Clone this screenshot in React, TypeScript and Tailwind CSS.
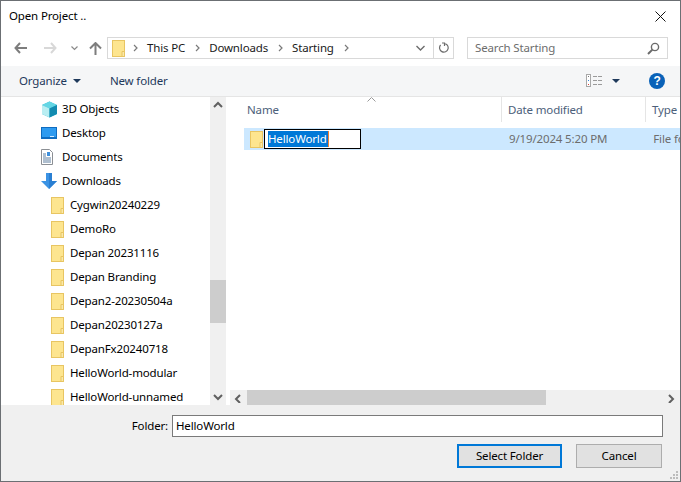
const font = "font-['Noto_Sans','Open_Sans',sans-serif]";

const folders = [
  "Cygwin20240229",
  "DemoRo",
  "Depan 20231116",
  "Depan Branding",
  "Depan2-20230504a",
  "Depan20230127a",
  "DepanFx20240718",
  "HelloWorld-modular",
  "HelloWorld-unnamed",
];

function FolderIcon() {
  return (
    <svg width="13" height="17" viewBox="0 0 13 17" className="shrink-0">
      <rect x="0.5" y="0.5" width="12" height="16" fill="#fde58f" stroke="#e8c562" />
      <path d="M10 16.5V11.5H12.5V16.5Z" fill="#fbe9a8" stroke="#e8c562" />
    </svg>
  );
}

function CubeIcon() {
  return (
    <svg width="17" height="17" viewBox="0 0 17 17" className="shrink-0">
      <path d="M8.5 0.5L16 4V13L8.5 16.5L1 13V4Z" fill="#2fb8d2" />
      <path d="M8.5 0.5L16 4L8.5 7.5L1 4Z" fill="#63d6e4" />
      <path d="M1 4L8.5 7.5V16.5L1 13Z" fill="#b9eef2" />
      <path d="M8.5 7.5L16 4V13L8.5 16.5Z" fill="#128bb0" />
    </svg>
  );
}

function DesktopIcon() {
  return (
    <svg width="16" height="12" viewBox="0 0 16 12" className="shrink-0">
      <rect x="0" y="0" width="16" height="12" fill="#0f6cc0" />
      <rect x="1" y="1" width="14" height="9" fill="#2e9bf0" />
      <rect x="9" y="9" width="4" height="1" fill="#d5ecff" />
    </svg>
  );
}

function DocumentsIcon() {
  return (
    <svg width="12" height="16" viewBox="0 0 12 16" className="shrink-0">
      <path d="M0.5 0.5H8.5L11.5 3.5V15.5H0.5Z" fill="#fff" stroke="#8b8f94" />
      <path d="M2 5H5M2 7H5M2 9H10M2 11H10M2 13H10" stroke="#5f7f9f" />
      <path d="M6 3H9V7H6Z" fill="#3d8fdc" />
    </svg>
  );
}

function DownloadsIcon() {
  return (
    <svg width="16" height="16" viewBox="0 0 16 16" className="shrink-0">
      <path d="M5 0H11V8H16L8 16L0 8H5Z" fill="#3b93e4" />
      <path d="M8 0H11V8H16L8 16Z" fill="#2a7fd2" />
    </svg>
  );
}

function NavArrow({ color, rotate }: { color: string; rotate: string }) {
  return (
    <svg width="13" height="12" viewBox="0 0 13 12" className={rotate}>
      <path d="M6 1L1.5 6L6 11M2 6H13" fill="none" stroke={color} strokeWidth="2" />
    </svg>
  );
}

function Chevron({ dir }: { dir: "up" | "down" | "left" | "right" }) {
  const d = {
    up: "M1 6L5 2L9 6",
    down: "M1 2L5 6L9 2",
    left: "M6 1L2 5L6 9",
    right: "M2 1L6 5L2 9",
  }[dir];
  return (
    <svg width="10" height="10" viewBox="0 0 10 8" className="shrink-0">
      <path d={d} fill="none" stroke="#606060" strokeWidth="2" />
    </svg>
  );
}

function Crumb() {
  return (
    <svg width="5" height="8" viewBox="0 0 5 8" className="shrink-0">
      <path d="M1 1L4 4L1 7" fill="none" stroke="#7a7a7a" strokeWidth="1.2" />
    </svg>
  );
}

function SideRow({ icon, label, child }: { icon: React.ReactNode; label: string; child?: boolean }) {
  return (
    <div className={`flex h-6 shrink-0 items-center ${child ? "pl-[50px]" : "pl-[40px]"}`}>
      <div className={`flex items-center justify-start ${child ? "w-[19px]" : "w-[21px]"}`}>{icon}</div>
      <span className="text-[11.5px] text-[#000] whitespace-nowrap">{label}</span>
    </div>
  );
}

export default function App() {
  return (
    <div className={`${font} flex h-[482px] w-[681px] flex-col overflow-hidden border border-[#6b6f73] bg-white tracking-[-0.15px]`}>
      {/* title bar */}
      <div className="flex h-[29px] shrink-0 items-center justify-between pl-[8px] pr-[14px] pt-[1px]">
        <span className="text-[11.5px] text-black">Open Project ..</span>
        <svg width="11" height="11" viewBox="0 0 11 11">
          <path d="M0.5 0.5L10.5 10.5M10.5 0.5L0.5 10.5" stroke="#111" strokeWidth="1" />
        </svg>
      </div>

      {/* nav row */}
      <div className="flex h-[36px] shrink-0 items-start pt-[7px]">
        <div className="flex h-[22px] w-[106px] shrink-0 items-center pl-[13px]">
          <NavArrow color="#7d7d7d" rotate="" />
          <div className="w-[17px]" />
          <NavArrow color="#d8d8d8" rotate="rotate-180" />
          <svg width="7" height="5" viewBox="0 0 7 5" className="ml-[14px]">
            <path d="M0.5 0.5L3.5 3.5L6.5 0.5" fill="none" stroke="#8a8a8a" strokeWidth="1.2" />
          </svg>
          <svg width="13" height="13" viewBox="0 0 13 13" className="ml-[11px]">
            <path d="M1 6.5L6.5 1L12 6.5M6.5 1.5V13" fill="none" stroke="#7d7d7d" strokeWidth="2" />
          </svg>
        </div>
        <div className="flex h-[22px] w-[347px] shrink-0 items-center border border-[#d9d9d9] pl-[4px]">
          <FolderIcon />
          <div className="ml-[8px]"><Crumb /></div>
          <span className="ml-[9px] text-[11.5px] text-[#1a1a1a]">This PC</span>
          <div className="ml-[10px]"><Crumb /></div>
          <span className="ml-[9px] text-[11.5px] text-[#1a1a1a]">Downloads</span>
          <div className="ml-[10px]"><Crumb /></div>
          <span className="ml-[9px] text-[11.5px] text-[#1a1a1a]">Starting</span>
          <div className="ml-[10px]"><Crumb /></div>
          <div className="flex-1" />
          <svg width="9" height="6" viewBox="0 0 9 6" className="mr-[8px]">
            <path d="M0.5 1L4.5 5L8.5 1" fill="none" stroke="#6d6d6d" strokeWidth="1.4" />
          </svg>
          <div className="flex h-full w-[20px] items-center justify-center border-l border-[#d9d9d9]">
            <svg width="11" height="12" viewBox="0 0 11 12">
              <path d="M4 1H6.5V4M6 1.5A4.3 4.3 0 1 1 2.6 3" fill="none" stroke="#6d6d6d" strokeWidth="1.2" />
            </svg>
          </div>
        </div>
        <div className="ml-[13px] flex h-[22px] w-[201px] shrink-0 items-center justify-between border border-[#d9d9d9] pl-[7px] pr-[7px]">
          <span className="text-[11.5px] text-[#6d6d6d]">Search Starting</span>
          <svg width="13" height="13" viewBox="0 0 13 13">
            <circle cx="8" cy="5" r="3.6" fill="none" stroke="#6b6b6b" strokeWidth="1.4" />
            <path d="M5.4 7.6L1 12" stroke="#6b6b6b" strokeWidth="2" />
          </svg>
        </div>
      </div>

      {/* toolbar */}
      <div className="flex h-[31px] shrink-0 items-center border-b border-[#e5e5e5] bg-[#f5f6f7] pb-[1px] pl-[18px] pr-[15px]">
        <span className="text-[11.5px] text-[#1e395b]">Organize</span>
        <svg width="8" height="4" viewBox="0 0 8 4" className="ml-[6px]">
          <path d="M0 0H8L4 4Z" fill="#1e395b" />
        </svg>
        <span className="ml-[29px] text-[11.5px] text-[#1e395b]">New folder</span>
        <div className="flex-1" />
        <svg width="16" height="13" viewBox="0 0 16 13">
          <rect x="0.5" y="0.5" width="4" height="12" fill="#fff" stroke="#a8a8a8" />
          <rect x="2" y="2" width="1" height="1" fill="#777" />
          <rect x="2" y="6" width="1" height="1" fill="#3a86d8" />
          <rect x="2" y="10" width="1" height="1" fill="#d8443c" />
          <path d="M7 2.5H11M12 2.5H16M7 6.5H11M12 6.5H16M7 10.5H11M12 10.5H16" stroke="#9a9a9a" />
        </svg>
        <svg width="8" height="4" viewBox="0 0 8 4" className="ml-[10px] mr-[29px]">
          <path d="M0 0H8L4 4Z" fill="#1e395b" />
        </svg>
        <div className="flex h-[16px] w-[16px] items-center justify-center rounded-full bg-[#0a62b8]">
          <span className="font-['Liberation_Sans',sans-serif] text-[12px] font-bold leading-none text-white">?</span>
        </div>
      </div>

      {/* main */}
      <div className="flex h-[308px] shrink-0">
        <div className="flex w-[209px] shrink-0 flex-col overflow-hidden">
          <SideRow icon={<CubeIcon />} label="3D Objects" />
          <SideRow icon={<DesktopIcon />} label="Desktop" />
          <SideRow icon={<DocumentsIcon />} label="Documents" />
          <SideRow icon={<DownloadsIcon />} label="Downloads" />
          {folders.map((name) => (
            <SideRow key={name} icon={<FolderIcon />} label={name} child />
          ))}
        </div>
        <div className="flex w-[16px] shrink-0 flex-col items-center bg-[#f0f0f0]">
          <div className="flex h-[16px] items-center justify-center"><Chevron dir="up" /></div>
          <div className="h-[167px]" />
          <div className="h-[43px] w-full bg-[#cdcdcd]" />
          <div className="flex-1" />
          <div className="flex h-[16px] items-center justify-center"><Chevron dir="down" /></div>
        </div>
        <div className="w-[4px] shrink-0" />
        <div className="flex min-w-0 flex-1 flex-col">
          <div className="relative flex h-[25px] shrink-0 text-[11.5px] text-[#4c607a]">
            <svg width="9" height="5" viewBox="0 0 9 5" className="absolute left-[137px] top-0">
              <path d="M0.5 4.5L4.5 0.5L8.5 4.5" fill="none" stroke="#9a9a9a" />
            </svg>
            <div className="flex w-[272px] items-center border-r border-[#e5e5e5] pl-[17px]">Name</div>
            <div className="flex w-[144px] items-center border-r border-[#e5e5e5] pl-[6px]">Date modified</div>
            <div className="flex items-center pl-[6px]">Type</div>
          </div>
          <div className="ml-[14px] mt-[6px] flex h-[22px] shrink-0 items-center bg-[#cce8ff] text-[11.5px]">
            <div className="ml-[6px] flex"><FolderIcon /></div>
            <div className="ml-[1px] flex h-[20px] w-[97px] shrink-0 items-center border border-black bg-white pl-[3px]">
              <span className="flex h-[16px] items-center border-r border-[#f08030] bg-[#0078d7] pr-[1px] leading-none text-white">HelloWorld</span>
            </div>
            <span className="ml-[148px] whitespace-nowrap text-[#6d6d6d]">9/19/2024 5:20 PM</span>
            <span className="ml-[46px] whitespace-nowrap text-[#6d6d6d]">File folder</span>
          </div>
          <div className="flex-1" />
          <div className="flex h-[15px] shrink-0 items-center bg-[#f0f0f0]">
            <div className="flex h-full w-[17px] items-center justify-center"><Chevron dir="left" /></div>
            <div className="h-full w-[299px] bg-[#cdcdcd]" />
            <div className="flex-1" />
            <div className="flex h-full w-[17px] items-center justify-center"><Chevron dir="right" /></div>
          </div>
        </div>
      </div>

      {/* footer */}
      <div className="relative flex h-[76px] shrink-0 flex-col bg-[#f0f0f0] pt-[10px]">
        <div className="flex h-[22px] items-center">
          <span className="w-[167px] text-right text-[11.5px] text-black">Folder:</span>
          <div className="ml-[4px] flex h-[22px] w-[491px] items-center border border-[#7a7a7a] bg-white pl-[3px]">
            <span className="text-[11.5px] text-black">HelloWorld</span>
          </div>
        </div>
        <div className="mt-[7px] flex">
          <button className="ml-[456px] h-[24px] w-[105px] border-2 border-[#0078d7] bg-[#e1e1e1] text-[11.5px] text-black">Select Folder</button>
          <button className="ml-[14px] h-[24px] w-[86px] border border-[#adadad] bg-[#e1e1e1] text-[11.5px] text-black">Cancel</button>
        </div>
        <svg width="10" height="10" viewBox="0 0 10 10" className="absolute bottom-[1px] right-[1px]">
          <path d="M7 1H9V3H7ZM4 4H6V6H4ZM7 4H9V6H7ZM1 7H3V9H1ZM4 7H6V9H4ZM7 7H9V9H7Z" fill="#bcbcbc" />
        </svg>
      </div>
    </div>
  );
}
